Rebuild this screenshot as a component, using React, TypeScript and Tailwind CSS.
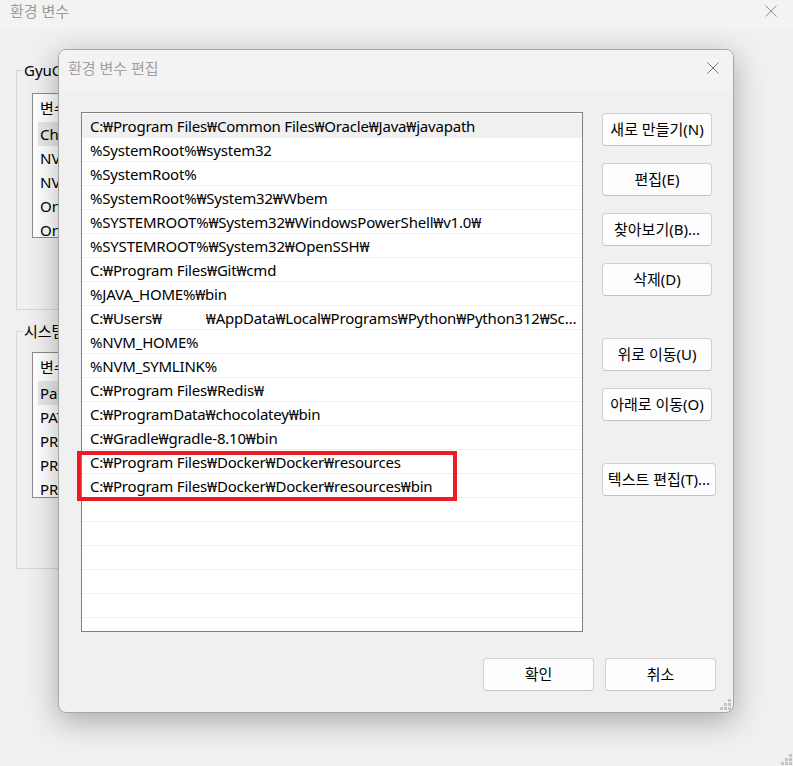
import React from 'react';

const paths: string[] = [
  'C:₩Program Files₩Common Files₩Oracle₩Java₩javapath',
  '%SystemRoot%₩system32',
  '%SystemRoot%',
  '%SystemRoot%₩System32₩Wbem',
  '%SYSTEMROOT%₩System32₩WindowsPowerShell₩v1.0₩',
  '%SYSTEMROOT%₩System32₩OpenSSH₩',
  'C:₩Program Files₩Git₩cmd',
  '%JAVA_HOME%₩bin',
  'USERS',
  '%NVM_HOME%',
  '%NVM_SYMLINK%',
  'C:₩Program Files₩Redis₩',
  'C:₩ProgramData₩chocolatey₩bin',
  'C:₩Gradle₩gradle-8.10₩bin',
  'C:₩Program Files₩Docker₩Docker₩resources',
  'C:₩Program Files₩Docker₩Docker₩resources₩bin',
  '',
  '',
  '',
  '',
  '',
  '',
];

const userVars = ['ChocolateyLastPathUpdate', 'NVM_HOME', 'NVM_SYMLINK', 'OneDrive', 'OneDriveConsumer'];
const systemVars = ['Path', 'PATHEXT', 'PROCESSOR_ARCHITECTURE', 'PROCESSOR_IDENTIFIER', 'PROCESSOR_LEVEL'];

const CloseIcon: React.FC<{ color: string }> = ({ color }) => (
  <svg width="12" height="12" viewBox="0 0 12 12" className="shrink-0">
    <path d="M0.5 0.5 L11.5 11.5 M11.5 0.5 L0.5 11.5" stroke={color} strokeWidth="1" fill="none" />
  </svg>
);

const Grip: React.FC = () => (
  <svg width="11" height="11" viewBox="0 0 11 11">
    <g fill="#c4c4c4">
      <rect x="8" y="0" width="3" height="3" />
      <rect x="4" y="4" width="3" height="3" />
      <rect x="8" y="4" width="3" height="3" />
      <rect x="0" y="8" width="3" height="3" />
      <rect x="4" y="8" width="3" height="3" />
      <rect x="8" y="8" width="3" height="3" />
    </g>
  </svg>
);

const Button: React.FC<{ label: string; className?: string }> = ({ label, className = '' }) => (
  <button
    className={`h-[33px] rounded-[4px] border border-[#d0d0d0] border-b-[#c2c2c2] bg-[#fdfdfd] text-[15px] leading-none text-black whitespace-nowrap ${className}`}
  >
    {label}
  </button>
);

const VarList: React.FC<{ rows: string[]; height: string }> = ({ rows, height }) => (
  <div className={`${height} ml-[15px] w-[640px] overflow-hidden border border-[#8c8c8c] bg-white`}>
    <div className="flex h-[28px] items-center pl-[7px]">
      <span className="w-[180px]">변수</span>
      <span>값</span>
    </div>
    {rows.map((r, i) => (
      <div key={r} className={`ml-[5px] h-[24px] pl-[2px] leading-[24px] ${i === 0 ? 'bg-[#e8e8e8]' : ''}`}>
        {r}
      </div>
    ))}
  </div>
);

const App: React.FC = () => {
  return (
    <div className="relative h-[766px] w-[793px] overflow-hidden bg-[#f0f0f0] font-['Noto_Sans','Noto_Sans_CJK_KR',sans-serif] text-[15px] text-black">
      {/* background window */}
      <div className="flex h-[30px] items-start justify-between bg-[#f3f3f3] pl-[10px] pr-[16px]">
        <span className="leading-[22px] text-[#9b9b9b]">환경 변수</span>
        <div className="mt-[5px]">
          <CloseIcon color="#8e8e8e" />
        </div>
      </div>

      <div className="px-[16px]">
        <fieldset className="mt-[30px] h-[250px] w-[690px] border border-[#d5d5d5] pt-[13px]">
          <legend className="ml-[6px] px-[1px] leading-[20px]">GyuCheol에 대한 사용자 변수(U)</legend>
          <VarList rows={userVars} height="h-[145px]" />
        </fieldset>

        <fieldset className="mt-[11px] h-[248px] w-[690px] border border-[#d5d5d5] pt-[11px]">
          <legend className="ml-[6px] px-[1px] leading-[20px]">시스템 변수(S)</legend>
          <VarList rows={systemVars} height="h-[146px]" />
        </fieldset>
      </div>

      <div className="absolute bottom-[1px] right-[1px]">
        <Grip />
      </div>

      {/* edit dialog */}
      <div className="absolute left-[58px] top-[49px] flex h-[664px] w-[676px] flex-col overflow-hidden rounded-[8px] border border-[#a6a6a6] bg-[#f0f0f0] shadow-[0_8px_30px_rgba(0,0,0,0.3)]">
        <div className="flex h-[40px] items-start justify-between bg-[#f3f3f3] pl-[9px] pr-[14px]">
          <span className="pt-[8px] leading-[20px] text-[#a0a0a0]">환경 변수 편집</span>
          <div className="mt-[12px]">
            <CloseIcon color="#7a7a7a" />
          </div>
        </div>

        <div className="flex flex-col pl-[22px] pr-[17px] pt-[22px]">
          <div className="flex">
            <div className="h-[520px] w-[504px] overflow-hidden border border-[#7f7f7f] bg-white pt-px tracking-[-0.2px]">
              {paths.map((p, i) => (
                <div
                  key={i}
                  className={`h-[24px] border-b border-[#efefef] pl-[8px] pr-[4px] pt-px leading-[23px] ${i === 0 ? 'bg-[#f0f0f0]' : ''}`}
                >
                  {p === 'USERS' ? (
                    <div className="flex">
                      <span className="shrink-0">C:₩Users₩</span>
                      <span className="w-[44px] shrink-0" />
                      <span className="min-w-0 flex-1 truncate">₩AppData₩Local₩Programs₩Python₩Python312₩Scripts₩</span>
                    </div>
                  ) : (
                    <span className="whitespace-nowrap">{p}</span>
                  )}
                </div>
              ))}
            </div>

            <div className="ml-[19px] flex flex-col items-start pt-px">
              <Button label="새로 만들기(N)" className="w-[110px]" />
              <Button label="편집(E)" className="mt-[17px] w-[110px]" />
              <Button label="찾아보기(B)..." className="mt-[17px] w-[110px]" />
              <Button label="삭제(D)" className="mt-[17px] w-[110px]" />
              <Button label="위로 이동(U)" className="mt-[42px] w-[110px]" />
              <Button label="아래로 이동(O)" className="mt-[17px] w-[110px]" />
              <Button label="텍스트 편집(T)..." className="mt-[42px] w-[114px]" />
            </div>
          </div>

          <div className="mt-[26px] flex justify-end gap-[11px]">
            <Button label="확인" className="w-[111px]" />
            <Button label="취소" className="w-[111px]" />
          </div>
        </div>

        <div className="absolute bottom-[2px] right-[2px]">
          <Grip />
        </div>
      </div>

      {/* annotation */}
      <div className="absolute left-[77px] top-[451px] h-[50px] w-[380px] border-4 border-[#ec1c24]" />
    </div>
  );
};

export default App;
